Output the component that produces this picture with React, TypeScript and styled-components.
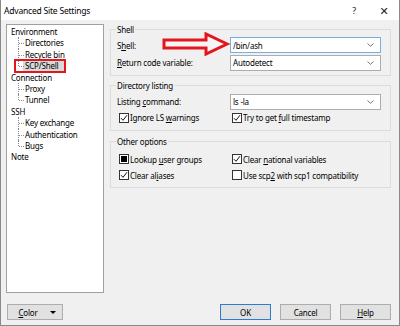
import React from 'react'
import styled, { createGlobalStyle } from 'styled-components'

const GlobalStyle = createGlobalStyle`
  html, body {
    margin: 0;
    padding: 0;
    background: #ffffff;
  }
  body {
    font-family: "Noto Sans", "DejaVu Sans", sans-serif;
    font-size: 8px;
    letter-spacing: -0.2px;
    color: #000;
  }
`

const Window = styled.div`
  width: 400px;
  height: 326px;
  box-sizing: border-box;
  border: 1px solid #8a8a8a;
  border-top: none;
  background: #f0f0f0;
  display: flex;
  flex-direction: column;
  position: relative;
`

const TitleBar = styled.div`
  height: 20px;
  background: #fff;
  display: flex;
  align-items: center;
  padding-left: 3px;
  font-size: 8.5px;
`

const TitleText = styled.span`
  flex: 1;
`

const TitleButton = styled.span<{ $big?: boolean }>`
  width: 30px;
  text-align: center;
  font-size: ${p => (p.$big ? '11px' : '9px')};
  color: #222;
`

const Main = styled.div`
  display: flex;
  padding: 4px 0 0 5px;
  gap: 6px;
`

const Tree = styled.div`
  width: 98px;
  height: 269px;
  box-sizing: border-box;
  background: #fff;
  border: 1px solid #a0a0a0;
  padding: 1px 0 0 4px;
  line-height: 11.4px;
`

const Node = styled.div`
  height: 11.4px;
  white-space: nowrap;
`

const Children = styled.div``

const Child = styled.div<{ $last?: boolean }>`
  position: relative;
  height: 11.4px;
  padding-left: 14px;
  white-space: nowrap;

  &::before {
    content: '';
    position: absolute;
    left: 7px;
    top: 0;
    height: ${p => (p.$last ? '6px' : '100%')};
    border-left: 1px dotted #8c8c8c;
  }
  &::after {
    content: '';
    position: absolute;
    left: 8px;
    top: 6px;
    width: 5px;
    border-top: 1px dotted #8c8c8c;
  }
`

const Selected = styled.span`
  display: inline-block;
  background: #d9d9d9;
  padding: 0 6px 0 2px;
  margin-left: -2px;
  line-height: 10px;
  position: relative;

  &::after {
    content: '';
    position: absolute;
    left: -9px;
    right: -2px;
    top: -2px;
    bottom: -2px;
    border: 2.5px solid #e3161d;
  }
`

const Panel = styled.div`
  width: 281px;
  display: flex;
  flex-direction: column;
`

const Group = styled.fieldset<{ $pt: number; $pb: number; $mt: number }>`
  margin: ${p => p.$mt}px 0 0 0;
  padding: ${p => p.$pt}px 9px ${p => p.$pb}px 6px;
  border: 1px solid #dcdcdc;
  min-width: 0;
  display: flex;
  flex-direction: column;
`

const Legend = styled.legend`
  padding: 0 1px;
  margin-left: -1px;
  line-height: 11px;
`

const Row = styled.div<{ $h: number }>`
  display: grid;
  grid-template-columns: 113px 1fr;
  align-items: center;
  height: ${p => p.$h}px;
`

const Combo = styled.div<{ $focus?: boolean }>`
  height: 16px;
  box-sizing: border-box;
  background: #fff;
  border: 1px solid ${p => (p.$focus ? '#7aaee0' : '#abadb3')};
  display: flex;
  align-items: center;
  padding: 0 6px 0 2px;
`

const ComboText = styled.span`
  flex: 1;
`

const Check = styled.label`
  display: flex;
  align-items: center;
  gap: 1px;
  margin-left: 2px;
  white-space: nowrap;
`

const Box = styled.span`
  width: 10px;
  height: 10px;
  box-sizing: border-box;
  border: 1px solid #333;
  background: #fff;
  display: flex;
  align-items: center;
  justify-content: center;
`

const Indeterminate = styled.span`
  width: 6px;
  height: 6px;
  background: #000;
`

const Footer = styled.div`
  display: flex;
  align-items: center;
  margin-top: auto;
  padding: 0 8px 5px 6px;
  gap: 9px;
`

const Button = styled.div<{ $w: number; $default?: boolean }>`
  width: ${p => p.$w}px;
  height: 16px;
  box-sizing: border-box;
  background: #e1e1e1;
  border: 1px solid ${p => (p.$default ? '#2b7cd3' : '#adadad')};
  display: flex;
  align-items: center;
  justify-content: center;
  position: relative;
`

const ButtonLabel = styled.span<{ $shift?: number }>`
  margin-right: ${p => p.$shift || 0}px;
`

const Spacer = styled.div`
  flex: 1;
`

const DropArrow = styled.span`
  position: absolute;
  right: 6px;
  top: 6px;
  border-left: 3px solid transparent;
  border-right: 3px solid transparent;
  border-top: 3px solid #000;
`

const Arrow = styled.svg`
  position: absolute;
  left: 161px;
  top: 32px;
`

const U = styled.span`
  text-decoration: underline;
`

const Chevron = () => (
  <svg width="7" height="4" viewBox="0 0 7 4">
    <path d="M0.5 0.5 L3.5 3.3 L6.5 0.5" stroke="#666" strokeWidth="0.9" fill="none" />
  </svg>
)

const Tick = () => (
  <svg width="8" height="8" viewBox="0 0 8 8">
    <path d="M1 4.2 L3 6.3 L7 1.2" stroke="#111" strokeWidth="1" fill="none" />
  </svg>
)

const CheckBox = ({ state, children }: { state: 'on' | 'off' | 'mixed'; children: React.ReactNode }) => (
  <Check>
    <Box>
      {state === 'on' && <Tick />}
      {state === 'mixed' && <Indeterminate />}
    </Box>
    <span>{children}</span>
  </Check>
)

export default function App() {
  return (
    <>
      <GlobalStyle />
      <Window>
        <TitleBar>
          <TitleText>Advanced Site Settings</TitleText>
          <TitleButton>?</TitleButton>
          <TitleButton $big>✕</TitleButton>
        </TitleBar>
        <Main>
          <Tree>
            <Node>Environment</Node>
            <Children>
              <Child>Directories</Child>
              <Child>Recycle bin</Child>
              <Child $last>
                <Selected>SCP/Shell</Selected>
              </Child>
            </Children>
            <Node>Connection</Node>
            <Children>
              <Child>Proxy</Child>
              <Child $last>Tunnel</Child>
            </Children>
            <Node>SSH</Node>
            <Children>
              <Child>Key exchange</Child>
              <Child>Authentication</Child>
              <Child $last>Bugs</Child>
            </Children>
            <Node>Note</Node>
          </Tree>
          <Panel>
            <Group $mt={0} $pt={1} $pb={4}>
              <Legend>Shell</Legend>
              <Row $h={18}>
                <span>S<U>h</U>ell:</span>
                <Combo $focus>
                  <ComboText>/bin/ash</ComboText>
                  <Chevron />
                </Combo>
              </Row>
              <Row $h={17}>
                <span><U>R</U>eturn code variable:</span>
                <Combo>
                  <ComboText>Autodetect</ComboText>
                  <Chevron />
                </Combo>
              </Row>
            </Group>
            <Group $mt={4} $pt={2} $pb={5}>
              <Legend>Directory listing</Legend>
              <Row $h={17}>
                <span>Listing <U>c</U>ommand:</span>
                <Combo>
                  <ComboText>ls -la</ComboText>
                  <Chevron />
                </Combo>
              </Row>
              <Row $h={15}>
                <CheckBox state="on">Ignore LS <U>w</U>arnings</CheckBox>
                <CheckBox state="on">Try to get <U>f</U>ull timestamp</CheckBox>
              </Row>
            </Group>
            <Group $mt={5} $pt={4} $pb={4}>
              <Legend>Other options</Legend>
              <Row $h={16}>
                <CheckBox state="mixed">Lookup <U>u</U>ser groups</CheckBox>
                <CheckBox state="on">Clear <U>n</U>ational variables</CheckBox>
              </Row>
              <Row $h={16}>
                <CheckBox state="on">Clear al<U>i</U>ases</CheckBox>
                <CheckBox state="off">Use scp<U>2</U> with scp1 compatibility</CheckBox>
              </Row>
            </Group>
          </Panel>
        </Main>
        <Footer>
          <Button $w={56}>
            <ButtonLabel $shift={14}><U>C</U>olor</ButtonLabel>
            <DropArrow />
          </Button>
          <Spacer />
          <Button $w={51} $default>OK</Button>
          <Button $w={51}>Cancel</Button>
          <Button $w={51}><U>H</U>elp</Button>
        </Footer>
        <Arrow width="72" height="24" viewBox="0 0 72 24">
          <path
            d="M2 8 L44 8 L44 2 L65 12 L44 22 L44 16 L2 16 Z"
            fill="#f6f6f6"
            stroke="#e3161d"
            strokeWidth="3"
            strokeLinejoin="miter"
          />
        </Arrow>
      </Window>
    </>
  )
}
